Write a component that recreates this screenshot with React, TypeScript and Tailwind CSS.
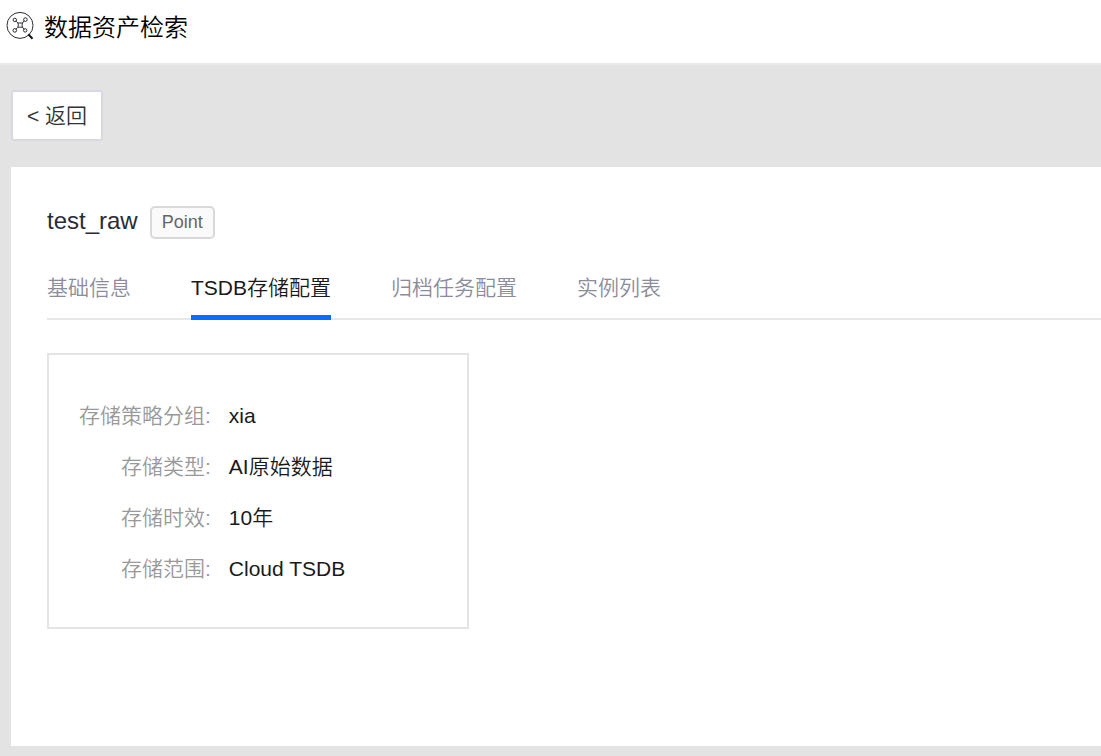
import { Fragment, useState } from "react";

const tabs = ["基础信息", "TSDB存储配置", "归档任务配置", "实例列表"];

const storageConfig = [
  { label: "存储策略分组", value: "xia" },
  { label: "存储类型", value: "AI原始数据" },
  { label: "存储时效", value: "10年" },
  { label: "存储范围", value: "Cloud TSDB" },
];

function AssetSearchIcon() {
  return (
    <svg
      className="size-7 shrink-0"
      viewBox="0 0 28 28"
      fill="none"
      stroke="#15151f"
      strokeWidth="0.9"
      aria-hidden="true"
    >
      <circle cx="14" cy="13.4" r="13" />
      <path d="M22.3 22.3l4.2 4.4" strokeWidth="2" />
      <path d="M11.9 11h4.6l-.5 2.1.5 2.1h-4.6l.5-2.1z" />
      <circle cx="8.8" cy="7.9" r="1.7" />
      <circle cx="19.4" cy="7.6" r="1.8" />
      <circle cx="8.8" cy="18.4" r="1.8" />
      <circle cx="19.2" cy="18.4" r="1.7" />
      <path d="M10 9.1l1.9 1.9M18.1 8.9l-1.6 2.1M10.1 17.1l1.8-1.9M18 17.2l-1.5-2" />
    </svg>
  );
}

export default function App() {
  const [active, setActive] = useState(1);

  return (
    <div className="flex min-h-screen flex-col bg-[#e3e3e3] font-['Liberation_Sans','Noto_Sans_CJK_SC',sans-serif] text-[21px] leading-[33px] font-[350] text-[#1a1a1a]">
      <header className="flex h-[65px] items-center gap-2.5 border-b-2 border-[#eaeaea] bg-white pb-3 pl-1.5">
        <AssetSearchIcon />
        <h1 className="pt-1 text-2xl leading-8 text-black">数据资产检索</h1>
      </header>

      <main className="flex grow flex-col items-start gap-[26px] pt-[25px] pb-2.5 pl-[11px]">
        <button
          type="button"
          className="rounded-[3px] border-2 border-[#d8d8e2] bg-white px-3.5 py-[7px] text-[#333]"
        >
          &lt; 返回
        </button>

        <section className="w-full grow bg-white pt-[35px] pl-9">
          <div className="flex items-center gap-3">
            <h2 className="text-2xl leading-8 text-[#2b2b36]">test_raw</h2>
            <span className="mt-1 rounded-[5px] border-2 border-[#d9d9d9] bg-[#fafafa] px-2.5 text-lg leading-[29px] text-[#666]">
              Point
            </span>
          </div>

          <div role="tablist" className="mt-6 flex gap-[60px] border-b-2 border-[#e8e8e8]">
            {tabs.map((tab, i) => (
              <button
                key={tab}
                id={`tab-${i}`}
                type="button"
                role="tab"
                aria-selected={active === i}
                aria-controls="tab-panel"
                onClick={() => setActive(i)}
                className={
                  active === i
                    ? "-mb-0.5 border-b-5 border-[#0a6cff] pt-2 pb-[11px] text-[#1a1a1a]"
                    : "-mb-0.5 border-b-5 border-transparent pt-2 pb-[11px] text-[#8c8c9c]"
                }
              >
                {tab}
              </button>
            ))}
          </div>

          <div id="tab-panel" role="tabpanel" aria-labelledby={`tab-${active}`} className="pt-[33px] pr-9 pb-8">
            {active === 1 && (
              <dl className="grid max-w-[422px] auto-rows-[51px] grid-cols-[auto_1fr] items-center gap-x-[18px] border-2 border-[#e4e4e4] px-[30px] pt-[35px] pb-[33px]">
                {storageConfig.map(({ label, value }) => (
                  <Fragment key={label}>
                    <dt className="text-right text-[#999]">{label}:</dt>
                    <dd>{value}</dd>
                  </Fragment>
                ))}
              </dl>
            )}
          </div>
        </section>
      </main>
    </div>
  );
}
